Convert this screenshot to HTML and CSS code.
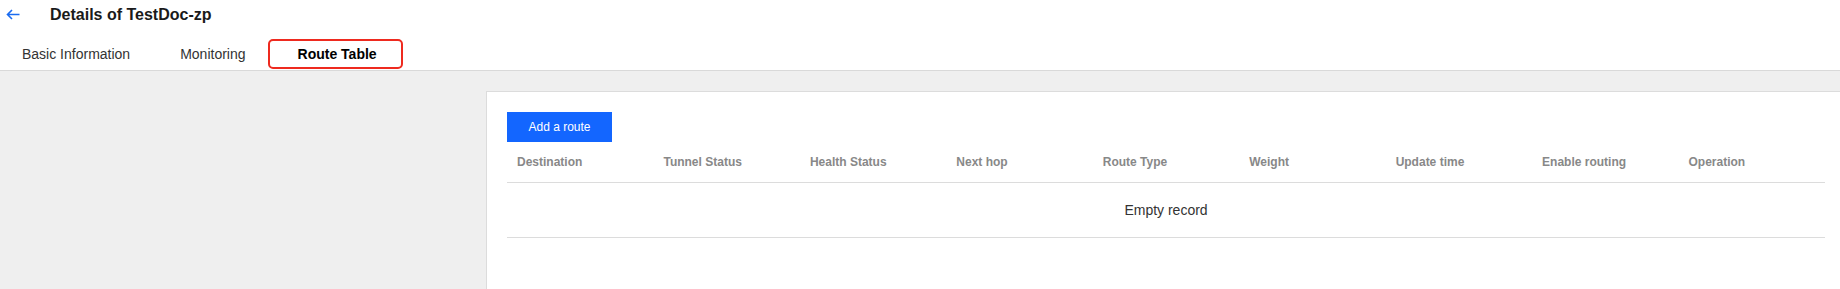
FILE: index.html
```html
<!DOCTYPE html>
<html lang="en">
  <head>
    <meta charset="UTF-8" />
    <title>Details of TestDoc-zp</title>
    <link rel="stylesheet" href="styles.css">
  </head>
  <body>
    <div class="top-bar">
      <svg class="back-icon" width="14" height="11" viewBox="0 0 14 11">
        <path d="M13.5 5.5H1.5M6 1L1.5 5.5L6 10" fill="none" stroke="#1a6bf0" stroke-width="1.6" />
      </svg>
      <div class="page-title">Details of TestDoc-zp</div>
    </div>
    <div class="tabs">
      <div class="tab">Basic Information</div>
      <div class="tab">Monitoring</div>
      <div class="tab active">Route Table</div>
    </div>
    <div class="content">
      <div class="card">
        <button class="add-btn">Add a route</button>
        <table class="route-table">
          <thead>
            <tr>
              <th>Destination</th>
              <th>Tunnel Status</th>
              <th>Health Status</th>
              <th>Next hop</th>
              <th>Route Type</th>
              <th>Weight</th>
              <th>Update time</th>
              <th>Enable routing</th>
              <th>Operation</th>
            </tr>
          </thead>
          <tbody>
            <tr>
              <td colspan="9" class="empty">Empty record</td>
            </tr>
          </tbody>
        </table>
      </div>
    </div>
  </body>
</html>
```

FILE: styles.css
```css
body {
  margin: 0;
  background: #fff;
  font-family: "Liberation Sans", Arial, sans-serif;
  color: #333;
  height: 100vh;
  overflow: hidden;
}
.top-bar {
  display: flex;
  align-items: center;
  height: 31px;
  padding-left: 6px;
}
.back-icon {
  display: block;
  margin-top: -2px;
}
.page-title {
  margin-left: 30px;
  font-size: 16px;
  font-weight: bold;
  color: #1a1a1a;
  margin-top: -2px;
}
.tabs {
  display: flex;
  align-items: flex-start;
  height: 40px;
  margin-left: -3px;
  border-bottom: 1px solid #d9d9d9;
  box-sizing: border-box;
}
.tab {
  margin-top: 8px;
  height: 30px;
  line-height: 30px;
  padding: 0 25px;
  font-size: 14px;
  color: #333;
  box-sizing: border-box;
}
.tab.active {
  margin-left: -3px;
  padding: 0 24px 0 28px;
  border: 2px solid #ee2a1f;
  border-radius: 5px;
  line-height: 26px;
  font-weight: bold;
  color: #000;
}
.content {
  height: 100%;
  background: #efefef;
  padding: 20px 0 0 486px;
}
.card {
  height: 100%;
  background: #fff;
  border: 1px solid #dcdcdc;
  border-right: none;
  padding: 20px 15px 0 20px;
  box-sizing: border-box;
}
.add-btn {
  display: block;
  width: 105px;
  height: 30px;
  border: none;
  background: #1366ff;
  color: #fff;
  font-family: "Liberation Sans", Arial, sans-serif;
  font-size: 12px;
  padding: 0;
}
.route-table {
  width: 100%;
  border-collapse: collapse;
  table-layout: fixed;
}
.route-table th {
  height: 40px;
  padding: 0 0 0 10px;
  text-align: left;
  font-size: 12px;
  font-weight: bold;
  color: #888;
  border-bottom: 1px solid #dcdcdc;
}
.route-table td.empty {
  height: 54px;
  text-align: center;
  font-size: 14px;
  color: #333;
  border-bottom: 1px solid #dcdcdc;
  padding: 0;
}
```
